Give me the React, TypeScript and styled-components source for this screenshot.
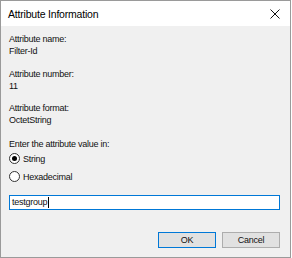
import React from "react";
import styled, { createGlobalStyle } from "styled-components";

const Global = createGlobalStyle`
  html, body { margin: 0; padding: 0; background: #ffffff; }
  body { font-family: "Liberation Sans", Arial, sans-serif; }
`;

const Window = styled.div`
  width: 291px;
  height: 258px;
  box-sizing: border-box;
  border: 1px solid #9a9a9a;
  background: #f0f0f0;
  display: flex;
  flex-direction: column;
  color: #000;
`;

const TitleBar = styled.div`
  height: 25px;
  background: #ffffff;
  display: flex;
  align-items: center;
  justify-content: space-between;
  padding: 0 7px 0 7px;
  flex-shrink: 0;
`;

const Title = styled.span`
  font-size: 10.5px;
  letter-spacing: -0.2px;
  color: #000;
  line-height: 14px;
`;

const CloseButton = styled.div`
  width: 12px;
  height: 12px;
  display: flex;
  align-items: center;
  justify-content: center;
  margin-right: 2px;
`;

const Body = styled.div`
  flex: 1;
  display: flex;
  flex-direction: column;
  padding: 7px 10px 9px 8px;
  font-size: 9px;
  letter-spacing: -0.25px;
  line-height: 12px;
  color: #111;
`;

const Field = styled.div`
  display: flex;
  flex-direction: column;
  margin-bottom: 10.5px;
`;

const Prompt = styled.div`
  margin-top: 1px;
  margin-bottom: 0;
`;

const RadioRow = styled.label`
  display: flex;
  align-items: center;
  gap: 3px;
  height: 18px;
`;

const RadioCircle = styled.span<{ $checked?: boolean }>`
  width: 11px;
  height: 11px;
  box-sizing: border-box;
  border-radius: 50%;
  border: 1px solid #333;
  background: #fff;
  display: flex;
  align-items: center;
  justify-content: center;
  &::after {
    content: "";
    width: 5px;
    height: 5px;
    border-radius: 50%;
    background: ${(p) => (p.$checked ? "#000" : "transparent")};
  }
`;

const InputBox = styled.div`
  margin-top: 9px;
  height: 15px;
  box-sizing: border-box;
  border: 1px solid #0078d7;
  background: #fff;
  display: flex;
  align-items: center;
  padding-left: 2px;
`;

const Caret = styled.span`
  display: inline-block;
  width: 1px;
  height: 11px;
  background: #000;
  margin-left: 1px;
`;

const ButtonRow = styled.div`
  margin-top: auto;
  display: flex;
  justify-content: flex-end;
  gap: 6px;
`;

const Button = styled.div<{ $primary?: boolean }>`
  width: 58px;
  height: 16px;
  box-sizing: border-box;
  background: #e1e1e1;
  border: 1px solid ${(p) => (p.$primary ? "#0078d7" : "#adadad")};
  display: flex;
  align-items: center;
  justify-content: center;
`;

export default function App() {
  return (
    <>
      <Global />
      <Window>
        <TitleBar>
          <Title>Attribute Information</Title>
          <CloseButton>
            <svg width="10" height="10" viewBox="0 0 10 10">
              <path d="M0.5 0.5 L9.5 9.5 M9.5 0.5 L0.5 9.5" stroke="#111" strokeWidth="1" fill="none" />
            </svg>
          </CloseButton>
        </TitleBar>
        <Body>
          <Field>
            <span>Attribute name:</span>
            <span>Filter-Id</span>
          </Field>
          <Field>
            <span>Attribute number:</span>
            <span>11</span>
          </Field>
          <Field>
            <span>Attribute format:</span>
            <span>OctetString</span>
          </Field>
          <Prompt>Enter the attribute value in:</Prompt>
          <RadioRow>
            <RadioCircle $checked />
            String
          </RadioRow>
          <RadioRow>
            <RadioCircle />
            Hexadecimal
          </RadioRow>
          <InputBox>
            testgroup
            <Caret />
          </InputBox>
          <ButtonRow>
            <Button $primary>OK</Button>
            <Button>Cancel</Button>
          </ButtonRow>
        </Body>
      </Window>
    </>
  );
}
